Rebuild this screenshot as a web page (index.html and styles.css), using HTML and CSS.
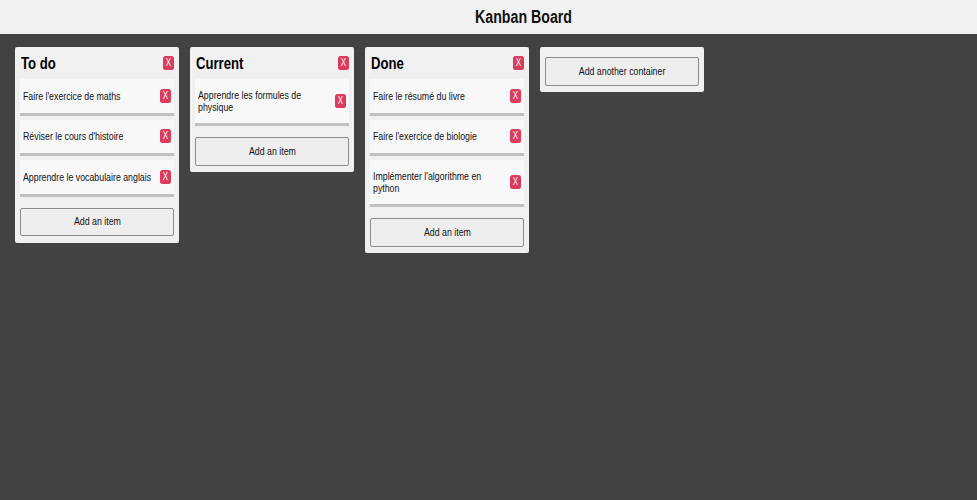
FILE: index.html
```html
<!DOCTYPE html>
<html lang="fr">
<head>
<meta charset="utf-8">
<title>Kanban Board</title>
<link rel="stylesheet" href="styles.css">
</head>
<body>
<header class="topbar"><h1><span class="t">Kanban Board</span></h1></header>
<main class="board">
  <section class="column">
    <div class="head"><h2><span class="t">To do</span></h2><button class="close"><span class="t">X</span></button></div>
    <div class="card"><p class="t">Faire l'exercice de maths</p><button class="close"><span class="t">X</span></button></div>
    <div class="card"><p class="t">Réviser le cours d'histoire</p><button class="close"><span class="t">X</span></button></div>
    <div class="card"><p class="t">Apprendre le vocabulaire anglais</p><button class="close"><span class="t">X</span></button></div>
    <button class="add"><span class="t">Add an item</span></button>
  </section>
  <section class="column">
    <div class="head"><h2><span class="t">Current</span></h2><button class="close"><span class="t">X</span></button></div>
    <div class="card tall"><p class="t">Apprendre les formules de<br>physique</p><button class="close"><span class="t">X</span></button></div>
    <button class="add"><span class="t">Add an item</span></button>
  </section>
  <section class="column">
    <div class="head"><h2><span class="t">Done</span></h2><button class="close"><span class="t">X</span></button></div>
    <div class="card"><p class="t">Faire le résumé du livre</p><button class="close"><span class="t">X</span></button></div>
    <div class="card"><p class="t">Faire l'exercice de biologie</p><button class="close"><span class="t">X</span></button></div>
    <div class="card tall"><p class="t">Implémenter l'algorithme en<br>python</p><button class="close"><span class="t">X</span></button></div>
    <button class="add"><span class="t">Add an item</span></button>
  </section>
  <section class="column new">
    <button class="add"><span class="t">Add another container</span></button>
  </section>
</main>
</body>
</html>
```
FILE: styles.css
```css
* { box-sizing: border-box; }
body {
  margin: 0;
  min-height: 100vh;
  background: #424242;
  color: #111;
  font-family: "Liberation Sans", Arial, sans-serif;
  overflow: hidden;
}
h1, h2, p { margin: 0; }
.t { display: inline-block; white-space: nowrap; transform: translateY(.4px) scaleX(.8); }
.topbar {
  height: 34px;
  padding-left: 71px;
  background: #f1f1f1;
  display: flex;
  align-items: center;
  justify-content: center;
}
.topbar h1 { font-size: 18px; line-height: 20px; }
.topbar .t { transform: scaleX(.788); }
.board {
  display: flex;
  align-items: flex-start;
  gap: 11px;
  padding: 13px 15px;
}
.column {
  width: 164px;
  padding: 0 5px 6.4px;
  background: #f0f0f0;
  border-radius: 2px;
}
.head {
  height: 32px;
  padding-left: 1px;
  display: flex;
  align-items: center;
  justify-content: space-between;
}
.head h2 { font-size: 16px; line-height: 18px; color: #000; }
.head .t { transform-origin: left; transform: translateY(.7px) scaleX(.82); }
.close {
  width: 11px;
  height: 14px;
  flex: none;
  padding: 0;
  border: 0;
  border-radius: 2.5px;
  background: #dc3b5c;
  color: #fff;
  font: 10px/14px "Liberation Sans", Arial, sans-serif;
  display: flex;
  align-items: center;
  justify-content: center;
}
.head .close .t, .close .t { transform-origin: center; transform: scaleX(.8); }
.card {
  height: 36.5px;
  margin-bottom: 4px;
  padding: 0 3px;
  background: #f8f8f8;
  border-bottom: 3px solid #c0c0c0;
  display: flex;
  align-items: center;
  justify-content: space-between;
}
.card.tall { height: 47px; }
.card p {
  width: 130px;
  font-size: 11.4px;
  line-height: 12px;
  transform-origin: left;
  transform: translateY(.4px) scaleX(.772);
}
.add {
  display: block;
  width: 100%;
  height: 28.5px;
  margin-top: 11.2px;
  padding: 0;
  background: #eee;
  border: 1px solid #8c8c8c;
  border-radius: 2px;
  color: #111;
  font: 11.4px/13px "Liberation Sans", Arial, sans-serif;
}
.add .t { transform: scaleX(.772); }
.new { padding-top: 10px; }
.new .add { margin-top: 0; }
```
